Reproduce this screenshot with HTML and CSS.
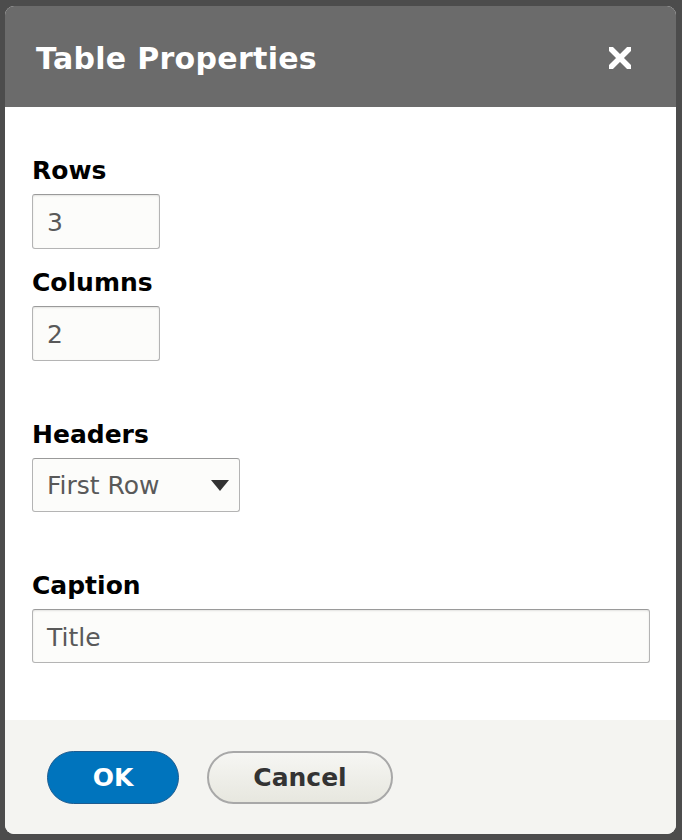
FILE: index.html
```html
<!DOCTYPE html>
<html lang="en">
<head>
<meta charset="utf-8">
<title>Table Properties</title>
<link rel="stylesheet" href="styles.css">
</head>
<body>
<div class="dialog">
  <div class="dialog-header">
    <h1 class="dialog-title">Table Properties</h1>
    <button class="dialog-close" aria-label="Close">
      <svg width="22" height="22" viewBox="0 0 22 22"><path d="M2 2 L20 20 M20 2 L2 20" stroke="#fff" stroke-width="5.6" stroke-linecap="square" fill="none"/></svg>
    </button>
  </div>
  <div class="dialog-body">
    <div class="group">
      <div class="form-item">
        <label class="label">Rows</label>
        <div class="input input-small">3</div>
      </div>
      <div class="form-item">
        <label class="label">Columns</label>
        <div class="input input-small">2</div>
      </div>
    </div>
    <div class="form-item">
      <label class="label">Headers</label>
      <div class="input select">
        <span>First Row</span>
        <svg class="caret" width="18" height="11" viewBox="0 0 18 11"><path d="M0 0 H18 L9 11 Z" fill="#333"/></svg>
      </div>
    </div>
    <div class="form-item">
      <label class="label">Caption</label>
      <div class="input input-wide">Title</div>
    </div>
  </div>
  <div class="dialog-footer">
    <button class="btn btn-primary">OK</button>
    <button class="btn btn-secondary">Cancel</button>
  </div>
</div>
</body>
</html>
```

FILE: styles.css
```css
html, body {
  margin: 0;
  padding: 0;
  background: #4c4c4c;
  font-family: "DejaVu Sans", "Liberation Sans", sans-serif;
}
.dialog {
  margin: 6px 0 0 5px;
  width: 671px;
  height: 828px;
  background: #fff;
  border-radius: 9px;
  overflow: hidden;
  display: flex;
  flex-direction: column;
}
.dialog-header {
  height: 101px;
  flex: none;
  background: #6b6b6b;
  display: flex;
  align-items: center;
  justify-content: space-between;
  padding: 2px 45px 0 31px;
  box-sizing: border-box;
}
.dialog-title {
  margin: 0;
  color: #fff;
  font-size: 30px;
  font-weight: bold;
  letter-spacing: 0.3px;
  line-height: 1;
  padding-top: 2px;
}
.dialog-close {
  background: none;
  border: 0;
  padding: 0;
  width: 22px;
  height: 22px;
  display: block;
}
.dialog-close svg { display: block; }
.dialog-body {
  flex: 1;
  padding: 48px 26px 0 27px;
  display: flex;
  flex-direction: column;
  gap: 58px;
}
.group {
  display: flex;
  flex-direction: column;
  gap: 18px;
}
.form-item {
  display: flex;
  flex-direction: column;
  align-items: flex-start;
  gap: 9px;
}
.label {
  display: block;
  font-size: 25px;
  font-weight: bold;
  color: #000;
  line-height: 32px;
  height: 30px;
}
.input {
  box-sizing: border-box;
  height: 55px;
  border: 1px solid #b4b4b4;
  border-top-color: #9a9a9a;
  border-radius: 3px;
  background: #fcfcfa;
  box-shadow: inset 0 1px 2px rgba(0,0,0,0.1);
  color: #595959;
  font-size: 25px;
  line-height: 56px;
  padding: 0 14px;
}
.input-small { width: 128px; }
.input-wide { width: 618px; height: 54px; line-height: 55px; }
.select {
  width: 208px;
  height: 54px;
  line-height: 54px;
  display: flex;
  align-items: center;
  justify-content: space-between;
  padding-right: 10px;
  box-shadow: none;
}
.select span { padding-top: 2px; }
.caret { display: block; }
.dialog-footer {
  flex: none;
  height: 114px;
  background: #f4f4f1;
  display: flex;
  align-items: flex-start;
  gap: 28px;
  padding: 31px 0 0 42px;
  box-sizing: border-box;
}
.btn {
  height: 53px;
  border-radius: 27px;
  font-family: "DejaVu Sans", "Liberation Sans", sans-serif;
  font-size: 25px;
  font-weight: bold;
  padding: 0;
  box-sizing: border-box;
}
.btn-primary {
  width: 132px;
  background: #0074bd;
  border: 1px solid #1e5c90;
  color: #fff;
}
.btn-secondary {
  width: 186px;
  background: linear-gradient(#f6f6f3, #e7e7df);
  border: 2px solid #a8a8a8;
  color: #333;
}
```
